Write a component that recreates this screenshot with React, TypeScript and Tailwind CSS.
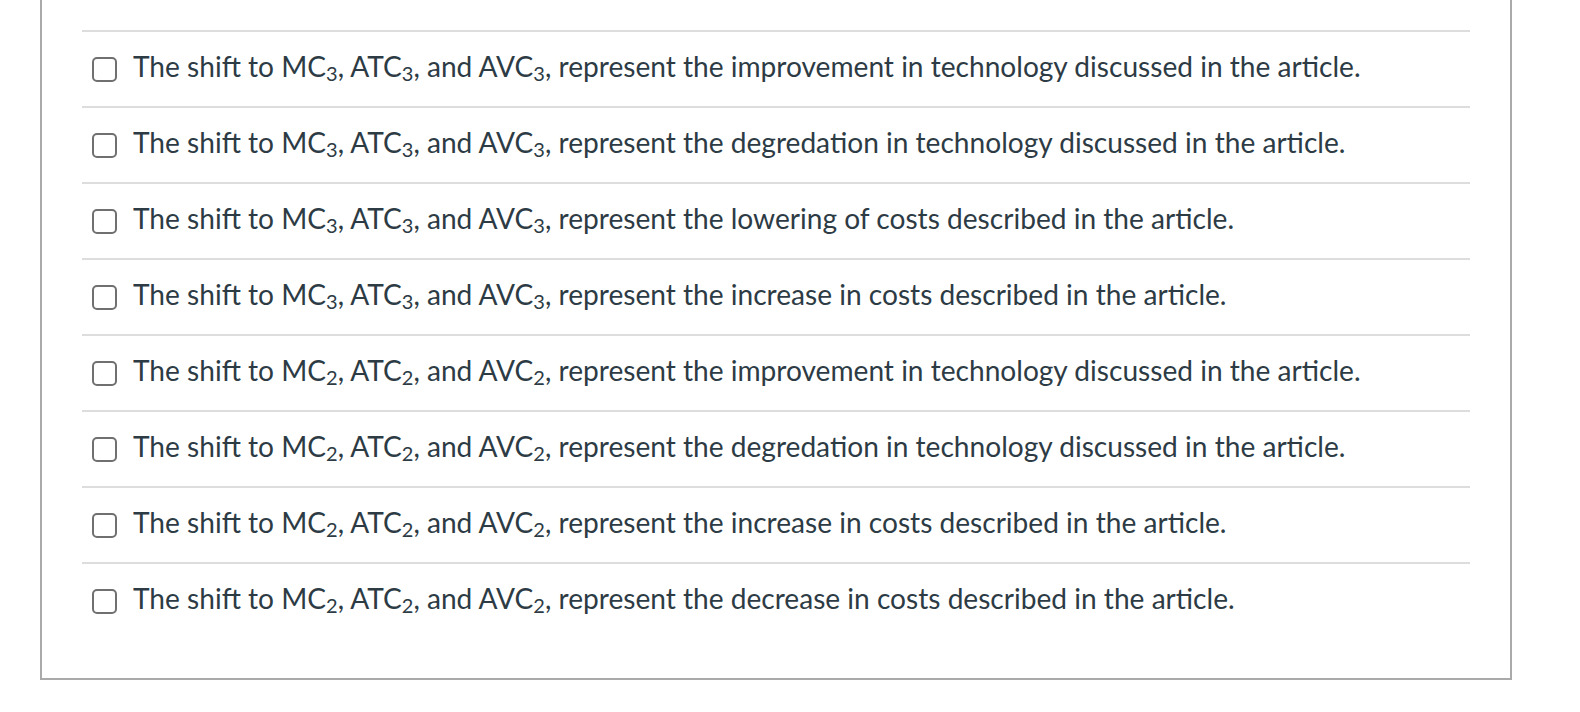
const options: { n: string; rest: string }[] = [
  { n: '3', rest: 'represent the improvement in technology discussed in the article.' },
  { n: '3', rest: 'represent the degredation in technology discussed in the article.' },
  { n: '3', rest: 'represent the lowering of costs described in the article.' },
  { n: '3', rest: 'represent the increase in costs described in the article.' },
  { n: '2', rest: 'represent the improvement in technology discussed in the article.' },
  { n: '2', rest: 'represent the degredation in technology discussed in the article.' },
  { n: '2', rest: 'represent the increase in costs described in the article.' },
  { n: '2', rest: 'represent the decrease in costs described in the article.' },
];

function Sub({ children }: { children: string }) {
  return <sub className="text-[20px] relative top-[4px]">{children}</sub>;
}

export default function App() {
  return (
    <div className="bg-white min-h-[712px] w-[1580px]" style={{ fontFamily: 'Lato, "Noto Sans", sans-serif' }}>
      <div className="ml-[40px] w-[1472px] border-x-2 border-b-2 border-[#aaaaaa] px-10 pt-[30px] pb-[40px]">
        <ul>
          {options.map((o, i) => (
            <li key={i} className="flex items-center h-[76px] border-t-2 border-[#dddddd] pl-[10px]">
              <span className="w-[25px] h-[25px] shrink-0 rounded-[5px] border-2 border-[#707070] bg-white" />
              <span className="ml-[16px] mb-[6px] text-[28.1px] leading-none text-[#2d3b45]">
                The shift to MC<Sub>{o.n}</Sub>, ATC<Sub>{o.n}</Sub>, and AVC<Sub>{o.n}</Sub>, {o.rest}
              </span>
            </li>
          ))}
        </ul>
      </div>
    </div>
  );
}
